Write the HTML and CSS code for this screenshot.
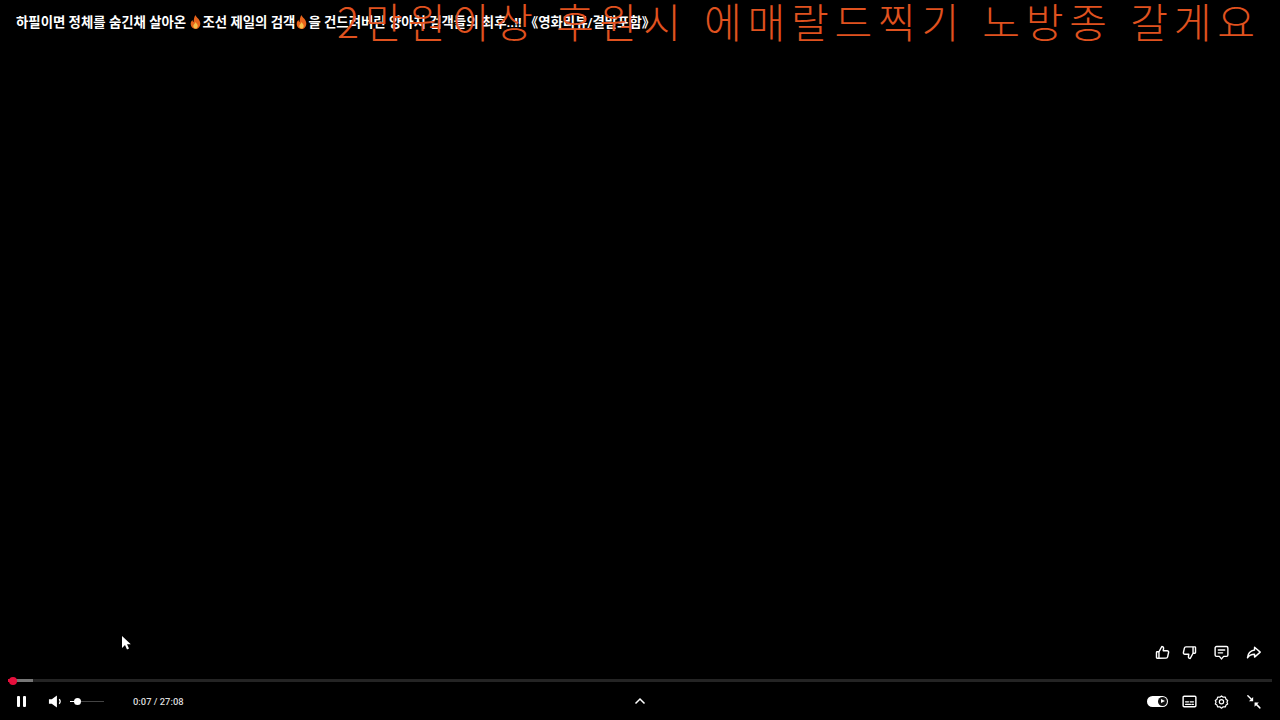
FILE: index.html

```html
<!DOCTYPE html>
<html lang="ko">
<head>
  <meta charset="UTF-8">
  <title>플레이어</title>
  <link rel="stylesheet" href="styles.css">
</head>
<body>
  <div class="player">
    <div class="title">하필이면 정체를 숨긴채 살아온 <svg class="fire" viewBox="0 0 12 14"><path fill="#e8641b" d="M6 0c.6 2.400 4.800 4.300 4.800 8.400C10.800 11.600 8.600 14 6 14S1.200 11.800 1.200 8.800c0-1.800.9-3 1.800-3.800.1 1.100.5 1.700 1.100 2C4.300 4.600 4.600 2 6 0z"/><path fill="#f7c04a" d="M6.200 7c.3 1.300 2 2.200 2 4 0 1.500-1 2.600-2.200 2.600S3.800 12.500 3.800 11c0-1.600 1.900-2.500 2.400-4z"/></svg>조선 제일의 검객<svg class="fire" viewBox="0 0 12 14"><path fill="#e8641b" d="M6 0c.6 2.400 4.800 4.300 4.800 8.400C10.800 11.600 8.600 14 6 14S1.200 11.800 1.200 8.800c0-1.800.9-3 1.800-3.800.1 1.100.5 1.700 1.100 2C4.300 4.600 4.600 2 6 0z"/><path fill="#f7c04a" d="M6.200 7c.3 1.300 2 2.200 2 4 0 1.500-1 2.600-2.200 2.600S3.800 12.500 3.800 11c0-1.600 1.900-2.500 2.400-4z"/></svg>을 건드려버린 양아치 검객들의 최후..‼ 《영화리뷰/결말포함》</div>
    <div class="donation">2만원이상 후원시 에매랄드찍기 노방종 갈게요</div>

    <div class="spacer">
      <svg class="cursor" viewBox="0 0 10 16"><path fill="#fff" d="M1 1v12l3-3 2 4.500 2-1-2-4.300h3.800z"/></svg>
    </div>

    <div class="actions">
      <svg class="icon like" viewBox="0 0 24 24"><path d="M7 11v9H4.500a1 1 0 0 1-1-1v-7a1 1 0 0 1 1-1H7l4-7.500c1.500 0 2.800 1.200 2.500 3L13 9.500h5.500c1.400 0 2.400 1.200 2.100 2.500l-1.400 6.300a2.200 2.200 0 0 1-2.100 1.700H7"/></svg>
      <svg class="icon" viewBox="0 0 24 24"><path d="M17 13V4h2.500a1 1 0 0 1 1 1v7a1 1 0 0 1-1 1H17l-4 7.500c-1.500 0-2.800-1.200-2.500-3l.5-3H5.500c-1.400 0-2.400-1.200-2.100-2.500l1.400-6.300A2.200 2.200 0 0 1 6.900 4H17"/></svg>
      <svg class="icon" viewBox="0 0 24 24"><path d="M5 3.500h14a2 2 0 0 1 2 2v10a2 2 0 0 1-2 2h-4l-3 3.500-3-3.500H5a2 2 0 0 1-2-2v-10a2 2 0 0 1 2-2zM7.500 8.500h9M7.500 12.500h6"/></svg>
      <svg class="icon" viewBox="0 0 24 24"><path d="M13.500 4.500l8 7-8 7v-4c-4.500 0-7.500 1.300-10 5 .5-5.500 3.500-10 10-11z"/></svg>
    </div>

    <div class="progress">
      <div class="progress-buffer"></div>
      <div class="progress-played"></div>
      <div class="progress-knob"></div>
    </div>

    <div class="controls">
      <div class="controls-left">
        <div class="pause"><span></span><span></span></div>
        <svg class="volume" viewBox="0 0 16 16"><path fill="#fff" d="M1 5.500h3L9.500 1.500v13L4 10.500H1z"/><path fill="none" stroke="#fff" stroke-width="1.300" d="M12 5.500c1.200 1.500 1.200 3.500 0 5"/></svg>
        <div class="volume-slider">
          <div class="volume-fill"></div>
          <div class="volume-knob"></div>
        </div>
        <div class="time">0:07 / 27:08</div>
      </div>
      <svg class="chevron" viewBox="0 0 12 8"><path d="M1.500 6.500L6 2l4.500 4.500"/></svg>
      <div class="controls-right">
        <div class="autoplay">
          <div class="autoplay-knob"><i></i></div>
        </div>
        <svg class="icon" viewBox="0 0 24 24"><path d="M4.500 4.500h15a1.500 1.500 0 0 1 1.500 1.500v12a1.500 1.500 0 0 1-1.500 1.500h-15A1.500 1.500 0 0 1 3 18V6a1.500 1.500 0 0 1 1.500-1.500zM6.500 12.500h4M13 12.500h4.500M6.500 16h7M15.500 16h2"/></svg>
        <svg class="icon" viewBox="-2 -2 28 28"><path d="M12 2.800l2.800 2.100 3.500-.1 1.100 3.400 2.800 2.200-1.200 2.900 1.200 2.900-2.800 1.700-1.100 3.100-3.500-.2-2.800 2.200-2.800-2.200-3.500.2-1.100-3.100-2.800-1.700 1.200-2.900-1.200-2.900 2.800-2.200 1.100-3.400 3.500.1z"/><circle cx="12" cy="12.500" r="3.500"/></svg>
        <svg class="icon" viewBox="0 0 24 24"><path d="M4 4l6 6M21 21l-6-6"/><path class="solid" d="M11.500 5.500v6h-6zM13.500 19.500v-6h6z"/></svg>
      </div>
    </div>
  </div>
</body>
</html>
```

FILE: styles.css

```css
html, body { margin: 0; height: 100%; }
body {
  background: #000;
  color: #fff;
  font-family: Roboto, "Noto Sans CJK KR", "Liberation Sans", sans-serif;
  overflow: hidden;
}
.player {
  position: relative;
  height: 720px;
  display: flex;
  flex-direction: column;
}
.title {
  padding: 14px 16px 0;
  font-size: 13.400px;
  line-height: 17px;
  font-weight: bold;
  white-space: nowrap;
}
.fire { width: 13px; height: 14px; vertical-align: -2px; }
.donation {
  position: absolute;
  top: 0;
  left: 337px;
  font-family: "Noto Sans CJK KR", sans-serif;
  font-size: 41px;
  line-height: 40px;
  letter-spacing: 5.800px;
  font-weight: 300;
  color: #e0521f;
  white-space: nowrap;
}
.spacer { flex: 1; position: relative; }
.cursor { position: absolute; left: 121px; top: 604px; width: 10px; height: 16px; }

.icon {
  width: 17px;
  height: 17px;
  fill: none;
  stroke: #fff;
  stroke-width: 2;
  stroke-linejoin: round;
  stroke-linecap: round;
}
.icon .solid { fill: #fff; stroke: none; }
.actions {
  display: flex;
  justify-content: flex-end;
  gap: 15px;
  padding-right: 18px;
  margin-bottom: 18px;
}
.like { margin-right: -5px; }
.progress {
  position: relative;
  height: 3px;
  margin: 0 8px;
  background: #242424;
}
.progress-buffer { position: absolute; left: 0; top: 0; height: 3px; width: 25px; background: #777; }
.progress-played { position: absolute; left: 0; top: 0; height: 3px; width: 5px; background: #e60f3c; }
.progress-knob {
  position: absolute;
  left: 1px;
  top: -2.500px;
  width: 8px;
  height: 8px;
  border-radius: 50%;
  background: #e60f3c;
}
.controls {
  height: 38px;
  padding: 0 18px 0 16px;
  display: grid;
  grid-template-columns: 1fr auto 1fr;
  align-items: center;
}
.controls-left { display: flex; align-items: center; }
.controls-right { display: flex; align-items: center; justify-content: flex-end; gap: 15px; }
.pause { display: flex; gap: 3px; width: 10px; margin-right: 21px; padding-left: 1px; }
.pause span { width: 3px; height: 11px; background: #fff; border-radius: 1px; }
.volume { width: 15px; height: 15px; margin-right: 7px; }
.volume-slider { position: relative; width: 34px; height: 1px; background: #444; margin-right: 29px; }
.volume-fill { position: absolute; left: 0; top: 0; width: 8px; height: 1px; background: #fff; }
.volume-knob {
  position: absolute;
  left: 4px;
  top: -3px;
  width: 7px;
  height: 7px;
  border-radius: 50%;
  background: #fff;
}
.time { font-size: 9.400px; font-weight: 500; color: #ddd; }
.chevron {
  width: 12px;
  height: 8px;
  fill: none;
  stroke: #fff;
  stroke-width: 1.500;
  margin-left: 2px;
}
.autoplay {
  width: 21px;
  height: 11px;
  margin-right: -2px;
  background: #fff;
  border-radius: 6px;
  display: flex;
  align-items: center;
  justify-content: flex-end;
}
.autoplay-knob {
  width: 9px;
  height: 9px;
  border-radius: 50%;
  background: #111;
  margin-right: 1px;
  display: flex;
  align-items: center;
  justify-content: center;
}
.autoplay-knob i {
  width: 0;
  height: 0;
  border-left: 4px solid #fff;
  border-top: 2.500px solid transparent;
  border-bottom: 2.500px solid transparent;
}
```
